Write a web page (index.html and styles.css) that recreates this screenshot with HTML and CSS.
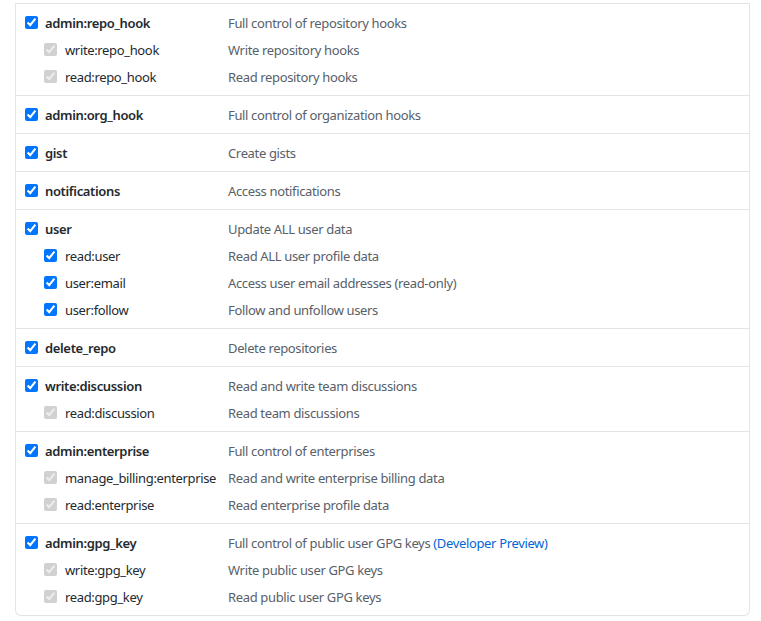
FILE: index.html
```html
<!DOCTYPE html>
<html>
<head>
<meta charset="utf-8">
<link rel="stylesheet" href="styles.css">
</head>
<body>
<div class="scopes">
  <div class="group">
    <div class="row"><label class="name main"><input type="checkbox" checked>admin:repo_hook</label><span class="desc">Full control of repository hooks</span></div>
    <div class="row"><label class="name sub"><input type="checkbox" checked disabled>write:repo_hook</label><span class="desc">Write repository hooks</span></div>
    <div class="row"><label class="name sub"><input type="checkbox" checked disabled>read:repo_hook</label><span class="desc">Read repository hooks</span></div>
  </div>
  <div class="group">
    <div class="row"><label class="name main"><input type="checkbox" checked>admin:org_hook</label><span class="desc">Full control of organization hooks</span></div>
  </div>
  <div class="group">
    <div class="row"><label class="name main"><input type="checkbox" checked>gist</label><span class="desc">Create gists</span></div>
  </div>
  <div class="group">
    <div class="row"><label class="name main"><input type="checkbox" checked>notifications</label><span class="desc">Access notifications</span></div>
  </div>
  <div class="group">
    <div class="row"><label class="name main"><input type="checkbox" checked>user</label><span class="desc">Update ALL user data</span></div>
    <div class="row"><label class="name sub"><input type="checkbox" checked>read:user</label><span class="desc">Read ALL user profile data</span></div>
    <div class="row"><label class="name sub"><input type="checkbox" checked>user:email</label><span class="desc">Access user email addresses (read-only)</span></div>
    <div class="row"><label class="name sub"><input type="checkbox" checked>user:follow</label><span class="desc">Follow and unfollow users</span></div>
  </div>
  <div class="group">
    <div class="row"><label class="name main"><input type="checkbox" checked>delete_repo</label><span class="desc">Delete repositories</span></div>
  </div>
  <div class="group">
    <div class="row"><label class="name main"><input type="checkbox" checked>write:discussion</label><span class="desc">Read and write team discussions</span></div>
    <div class="row"><label class="name sub"><input type="checkbox" checked disabled>read:discussion</label><span class="desc">Read team discussions</span></div>
  </div>
  <div class="group">
    <div class="row"><label class="name main"><input type="checkbox" checked>admin:enterprise</label><span class="desc">Full control of enterprises</span></div>
    <div class="row"><label class="name sub"><input type="checkbox" checked disabled>manage_billing:enterprise</label><span class="desc">Read and write enterprise billing data</span></div>
    <div class="row"><label class="name sub"><input type="checkbox" checked disabled>read:enterprise</label><span class="desc">Read enterprise profile data</span></div>
  </div>
  <div class="group">
    <div class="row"><label class="name main"><input type="checkbox" checked>admin:gpg_key</label><span class="desc">Full control of public user GPG keys <a class="link" href="#">(Developer Preview)</a></span></div>
    <div class="row"><label class="name sub"><input type="checkbox" checked disabled>write:gpg_key</label><span class="desc">Write public user GPG keys</span></div>
    <div class="row"><label class="name sub"><input type="checkbox" checked disabled>read:gpg_key</label><span class="desc">Read public user GPG keys</span></div>
  </div>
</div>
</body>
</html>
```

FILE: styles.css
```css
html, body {
  margin: 0;
  padding: 0;
  background: #ffffff;
}
body {
  font-family: "Noto Sans", "Open Sans", sans-serif;
  font-size: 13px;
  letter-spacing: -0.35px;
  color: #24292e;
  padding-top: 3px;
}
.scopes {
  margin: 0 11px 0 15px;
  border: 1px solid #e1e4e8;
  border-top: none;
  border-radius: 0 0 6px 6px;
}
.group {
  border-top: 1px solid #e1e4e8;
  padding: 5px 0 5px 9px;
}
.row {
  display: flex;
  align-items: center;
  height: 27px;
}
.name {
  width: 203px;
  flex: none;
  display: flex;
  align-items: center;
  box-sizing: border-box;
  white-space: nowrap;
}
.name input {
  margin: 0 7px 0 0;
  width: 13px;
  height: 13px;
}
.main {
  font-weight: 600;
}
.sub {
  padding-left: 19px;
}
.sub input {
  margin-right: 8px;
}
.desc {
  color: #586069;
  white-space: nowrap;
}
.link {
  color: #0366d6;
  text-decoration: none;
}
```
